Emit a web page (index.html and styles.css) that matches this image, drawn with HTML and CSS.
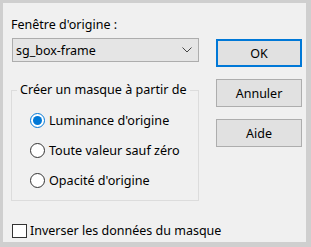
FILE: index.html
```html
<!DOCTYPE html>
<html lang="fr">
<head>
    <meta charset="UTF-8">
    <title>Créer un masque</title>
    <link rel="stylesheet" href="styles.css">
</head>
<body>
    <div class="dialog">
        <div class="main">
            <div class="left">
                <div class="field-label">Fenêtre d'origine :</div>
                <div class="select">
                    <span>sg_box-frame</span>
                    <svg class="chevron" width="10" height="6" viewBox="0 0 10 6">
                        <path d="M0.5 0.5 L5 5 L9.5 0.5" fill="none" stroke="#444" stroke-width="1"/>
                    </svg>
                </div>
                <div class="group">
                    <div class="group-title">Créer un masque à partir de</div>
                    <div class="radio-row">
                        <span class="radio checked"></span>
                        <span>Luminance d'origine</span>
                    </div>
                    <div class="radio-row">
                        <span class="radio"></span>
                        <span>Toute valeur sauf zéro</span>
                    </div>
                    <div class="radio-row">
                        <span class="radio"></span>
                        <span>Opacité d'origine</span>
                    </div>
                </div>
            </div>
            <div class="buttons">
                <button class="btn default">OK</button>
                <button class="btn">Annuler</button>
                <button class="btn">Aide</button>
            </div>
        </div>
        <div class="check-row">
            <span class="checkbox"></span>
            <span>Inverser les données du masque</span>
        </div>
    </div>
</body>
</html>
```

FILE: styles.css
```css
body {
    margin: 0;
    background: #cfcfcf;
    font-family: "Noto Sans", "Open Sans", sans-serif;
    font-size: 12.5px;
    color: #000;
    white-space: nowrap;
}
.dialog {
    margin: 3px 5px 5px 3px;
    height: 239px;
    background: #f0f0f0;
    box-sizing: border-box;
    padding-top: 14px;
}
.main {
    display: flex;
}
.left {
    width: 188px;
    margin-left: 8px;
}
.field-label {
    line-height: 16px;
}
.select {
    margin-top: 5px;
    margin-left: 1px;
    height: 24px;
    box-sizing: border-box;
    border: 1px solid #adadad;
    background: #e5e5e5;
    display: flex;
    align-items: center;
    justify-content: space-between;
    padding: 0 6px 0 3px;
}
.chevron {
    display: block;
}
.group {
    margin-top: 28px;
    border: 1px solid #dcdcdc;
    height: 111px;
    box-sizing: border-box;
    position: relative;
    padding-top: 20px;
    padding-left: 18px;
    font-size: 12.6px;
}
.group-title {
    position: absolute;
    top: -10px;
    left: 5px;
    padding: 0 3px;
    background: #f0f0f0;
    line-height: 18px;
}
.radio-row {
    display: flex;
    align-items: center;
    gap: 4px;
    height: 18px;
    margin-bottom: 12px;
}
.radio {
    width: 15px;
    height: 15px;
    box-sizing: border-box;
    border: 1px solid #333;
    border-radius: 50%;
    background: #fff;
    display: flex;
    align-items: center;
    justify-content: center;
}
.radio.checked {
    border-color: #0078d7;
}
.radio.checked::after {
    content: "";
    width: 9px;
    height: 9px;
    border-radius: 50%;
    background: #0078d7;
}
.buttons {
    margin-left: 17px;
    margin-top: 22px;
    display: flex;
    flex-direction: column;
    gap: 12px;
}
.btn {
    width: 86px;
    height: 28px;
    border: 1px solid #adadad;
    background: #e1e1e1;
    font-family: inherit;
    font-size: 12.5px;
    color: #000;
    padding: 0;
}
.btn.default {
    border: 2px solid #0078d7;
}
.check-row {
    display: flex;
    align-items: center;
    gap: 3px;
    margin-left: 9px;
    margin-top: 21px;
}
.checkbox {
    width: 15px;
    height: 14px;
    box-sizing: border-box;
    border: 1px solid #333;
    background: #fff;
}
```
